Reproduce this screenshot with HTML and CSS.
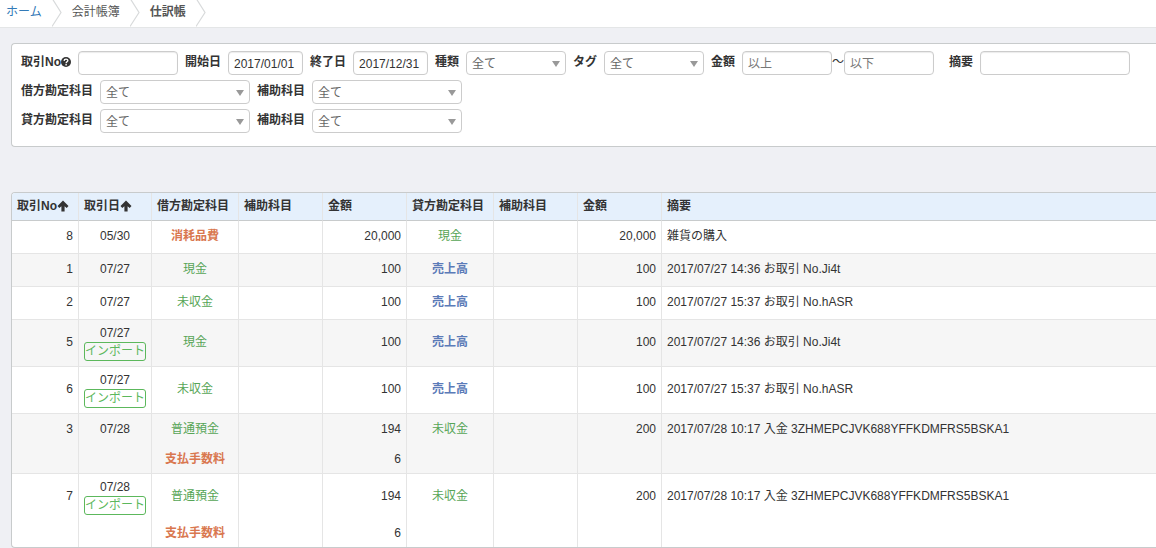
FILE: index.html
```html
<!DOCTYPE html>
<html lang="ja">
<head>
<meta charset="utf-8">
<title>仕訳帳</title>
<link rel="stylesheet" href="styles.css">
</head>
<body>
<svg class="defs" width="0" height="0" aria-hidden="true">
  <symbol id="chevron" viewBox="0 0 10 27"><path d="M0.500 -1 L9 12.500 L0 26.500" fill="none" stroke="#d8dadb" stroke-width="1.200"/></symbol>
  <symbol id="up" viewBox="0 0 12 12"><path d="M6 0.500 L11.500 6 L9.700 8 L7.600 6.200 V11.400 H4.400 V6.200 L2.300 8 L0.500 6 Z" fill="currentColor"/></symbol>
</svg>
<nav class="breadcrumb">
  <a class="crumb crumb-link" href="#">ホーム</a>
  <svg class="chevron"><use href="#chevron"/></svg>
  <span class="crumb">会計帳簿</span>
  <svg class="chevron"><use href="#chevron"/></svg>
  <span class="crumb crumb-current">仕訳帳</span>
  <svg class="chevron"><use href="#chevron"/></svg>
</nav>
<main class="content">
  <form class="filters">
    <div class="filter-row">
      <div class="field">
        <label for="no">取引No<svg class="help" viewBox="0 0 10 10"><circle cx="5" cy="5" r="5" fill="currentColor"/><path d="M3.100 3.900 C3.200 1.400 7 1.600 6.800 3.700 C6.700 4.800 5.100 4.800 5.100 6.200" fill="none" stroke="#fff" stroke-width="1.400"/><path d="M4.400 7 H5.800 V8.400 H4.400 Z" fill="#fff"/></svg></label>
        <input id="no" class="control w-medium" type="text">
      </div>
      <div class="field"><label for="from">開始日</label><input id="from" class="control w-date" type="text" value="2017/01/01"></div>
      <div class="field"><label for="to">終了日</label><input id="to" class="control w-date" type="text" value="2017/12/31"></div>
      <div class="field"><label for="kind">種類</label><span class="picker w-medium"><select id="kind" class="control"><option>全て</option></select></span></div>
      <div class="field"><label for="tag">タグ</label><span class="picker w-medium"><select id="tag" class="control"><option>全て</option></select></span></div>
      <div class="field"><label for="min">金額</label><span class="range"><input id="min" class="control w-amount" type="text" placeholder="以上"><span class="tilde">～</span><input class="control w-amount" type="text" placeholder="以下" aria-label="金額 以下"></span></div>
      <div class="field field-apart"><label for="memo">摘要</label><input id="memo" class="control w-large" type="text"></div>
    </div>
    <div class="filter-row">
      <div class="field"><label for="dr">借方勘定科目</label><span class="picker w-large"><select id="dr" class="control"><option>全て</option></select></span></div>
      <div class="field"><label for="drsub">補助科目</label><span class="picker w-large"><select id="drsub" class="control"><option>全て</option></select></span></div>
    </div>
    <div class="filter-row">
      <div class="field"><label for="cr">貸方勘定科目</label><span class="picker w-large"><select id="cr" class="control"><option>全て</option></select></span></div>
      <div class="field"><label for="crsub">補助科目</label><span class="picker w-large"><select id="crsub" class="control"><option>全て</option></select></span></div>
    </div>
  </form>

  <div class="journal">
    <table>
      <colgroup><col class="c-no"><col class="c-date"><col class="c-account"><col class="c-sub"><col class="c-sub"><col class="c-account"><col class="c-sub"><col class="c-sub"><col></colgroup>
      <thead>
        <tr>
          <th><button class="sort" type="button">取引No<svg class="arrow"><use href="#up"/></svg></button></th>
          <th><button class="sort" type="button">取引日<svg class="arrow"><use href="#up"/></svg></button></th>
          <th>借方勘定科目</th><th>補助科目</th><th>金額</th><th>貸方勘定科目</th><th>補助科目</th><th>金額</th><th>摘要</th>
        </tr>
      </thead>
      <tbody>
        <tr class="single"><td class="num">8</td><td class="mid">05/30</td><td class="mid expense">消耗品費</td><td></td><td class="num">20,000</td><td class="mid asset">現金</td><td></td><td class="num">20,000</td><td>雑貨の購入</td></tr>
      </tbody>
      <tbody class="alt">
        <tr class="single"><td class="num">1</td><td class="mid">07/27</td><td class="mid asset">現金</td><td></td><td class="num">100</td><td class="mid income">売上高</td><td></td><td class="num">100</td><td>2017/07/27 14:36 お取引 No.Ji4t</td></tr>
      </tbody>
      <tbody>
        <tr class="single"><td class="num">2</td><td class="mid">07/27</td><td class="mid asset">未収金</td><td></td><td class="num">100</td><td class="mid income">売上高</td><td></td><td class="num">100</td><td>2017/07/27 15:37 お取引 No.hASR</td></tr>
      </tbody>
      <tbody class="alt">
        <tr class="tagged"><td class="num">5</td><td class="mid date">07/27<span class="badge">インポート</span></td><td class="mid asset">現金</td><td></td><td class="num">100</td><td class="mid income">売上高</td><td></td><td class="num">100</td><td>2017/07/27 14:36 お取引 No.Ji4t</td></tr>
      </tbody>
      <tbody>
        <tr class="tagged"><td class="num">6</td><td class="mid date">07/27<span class="badge">インポート</span></td><td class="mid asset">未収金</td><td></td><td class="num">100</td><td class="mid income">売上高</td><td></td><td class="num">100</td><td>2017/07/27 15:37 お取引 No.hASR</td></tr>
      </tbody>
      <tbody class="alt">
        <tr><td class="num">3</td><td class="mid">07/28</td><td class="mid asset">普通預金</td><td></td><td class="num">194</td><td class="mid asset">未収金</td><td></td><td class="num">200</td><td>2017/07/28 10:17 入金 3ZHMEPCJVK688YFFKDMFRS5BSKA1</td></tr>
        <tr><td></td><td></td><td class="mid expense">支払手数料</td><td></td><td class="num">6</td><td></td><td></td><td></td><td></td></tr>
      </tbody>
      <tbody>
        <tr class="tagged-first"><td class="num">7</td><td class="mid">07/28<span class="badge">インポート</span></td><td class="mid asset">普通預金</td><td></td><td class="num">194</td><td class="mid asset">未収金</td><td></td><td class="num">200</td><td>2017/07/28 10:17 入金 3ZHMEPCJVK688YFFKDMFRS5BSKA1</td></tr>
        <tr><td></td><td></td><td class="mid expense">支払手数料</td><td></td><td class="num">6</td><td></td><td></td><td></td><td></td></tr>
      </tbody>
    </table>
  </div>
</main>
</body>
</html>
```
FILE: styles.css
```css
* { box-sizing: border-box; }

body {
  margin: 0;
  background: #eff0f4;
  color: #333;
  font: 12px/18px "Liberation Sans", "Noto Sans CJK JP", sans-serif;
}

.defs { position: absolute; }

.breadcrumb {
  display: flex;
  gap: 10px;
  height: 28px;
  padding-left: 6px;
  background: #fff;
  border-bottom: 1px solid #e4e6e7;
}
.crumb { padding-top: 3px; color: #555; }
.crumb-link { color: #337ab7; text-decoration: none; }
.crumb-current { font-weight: bold; }
.chevron { width: 10px; height: 27px; }

.content { padding: 15px 0 0 11px; }

.filters {
  display: flex;
  flex-direction: column;
  gap: 5px;
  padding: 7px 9px 13px;
  background: #fff;
  border: 1px solid #c8cbcc;
  border-right: 0;
  border-radius: 4px 0 0 4px;
}
.filter-row { display: flex; gap: 7px; }
.field { display: flex; align-items: flex-start; gap: 7px; white-space: nowrap; }
.field-apart { margin-left: 8px; }
.field label { padding-top: 2px; font-weight: bold; }
.help { width: 10px; height: 10px; vertical-align: -1px; }

.control {
  height: 24px;
  padding: 1px 5px 0;
  background: #fff;
  border: 1px solid #ccc;
  border-radius: 4px;
  color: #333;
  font: inherit;
}
input.control { box-shadow: inset 0 1px 1px rgba(0, 0, 0, 0.08); }
.control::placeholder { color: #777; opacity: 1; }
.w-date { width: 75px; }
.w-amount { width: 90px; }
.w-medium { width: 100px; }
.w-large { width: 150px; }

.picker { position: relative; display: flex; }
.picker select { appearance: none; width: 100%; color: #666; }
.picker::after {
  content: "";
  position: absolute;
  top: 10px;
  right: 6px;
  border: 4px solid transparent;
  border-top: 6px solid #999;
  border-bottom: 0;
  pointer-events: none;
}
.range { display: flex; }
.tilde { width: 12px; padding-top: 2px; }

.journal {
  margin-top: 45px;
  overflow: hidden;
  background: #fff;
  border: 1px solid #c8cbcc;
  border-right: 0;
  border-radius: 4px 0 0 4px;
}
table { width: 100%; table-layout: fixed; border-collapse: separate; border-spacing: 0; }
.c-no { width: 67px; }
.c-date { width: 73px; }
.c-account { width: 87px; }
.c-sub { width: 84px; }

th, td { padding: 0 5px; border-right: 1px solid #e5e5e5; white-space: nowrap; }
th:last-child, td:last-child { border-right: 0; }
th {
  height: 28px;
  padding-bottom: 2px;
  background: #e5f0fc;
  border-bottom: 1px solid #c8cbcc;
  text-align: left;
}
.sort { padding: 0; background: none; border: 0; color: inherit; font: inherit; cursor: pointer; }
.arrow { width: 12px; height: 12px; vertical-align: -2px; }

td { height: 30px; text-align: left; }
tbody tr:last-child td { border-bottom: 1px solid #e5e5e5; }
tbody:last-child tr:last-child td { height: 29px; border-bottom: 0; }
.single td { height: 33px; padding-bottom: 2px; }
.tagged td { height: 47px; padding-bottom: 3px; }
.tagged td.date { padding-bottom: 1px; }
.tagged-first td { height: 44px; }
.alt { background: #f6f6f6; }

td.num { text-align: right; }
td.mid { text-align: center; }
.asset { color: #56a556; }
.expense { color: #d9774f; font-weight: bold; }
.income { color: #5b7bb8; font-weight: bold; }
.badge {
  display: block;
  height: 19px;
  border: 1px solid #5cb85c;
  border-radius: 3px;
  color: #5cb85c;
  line-height: 16px;
}
```
